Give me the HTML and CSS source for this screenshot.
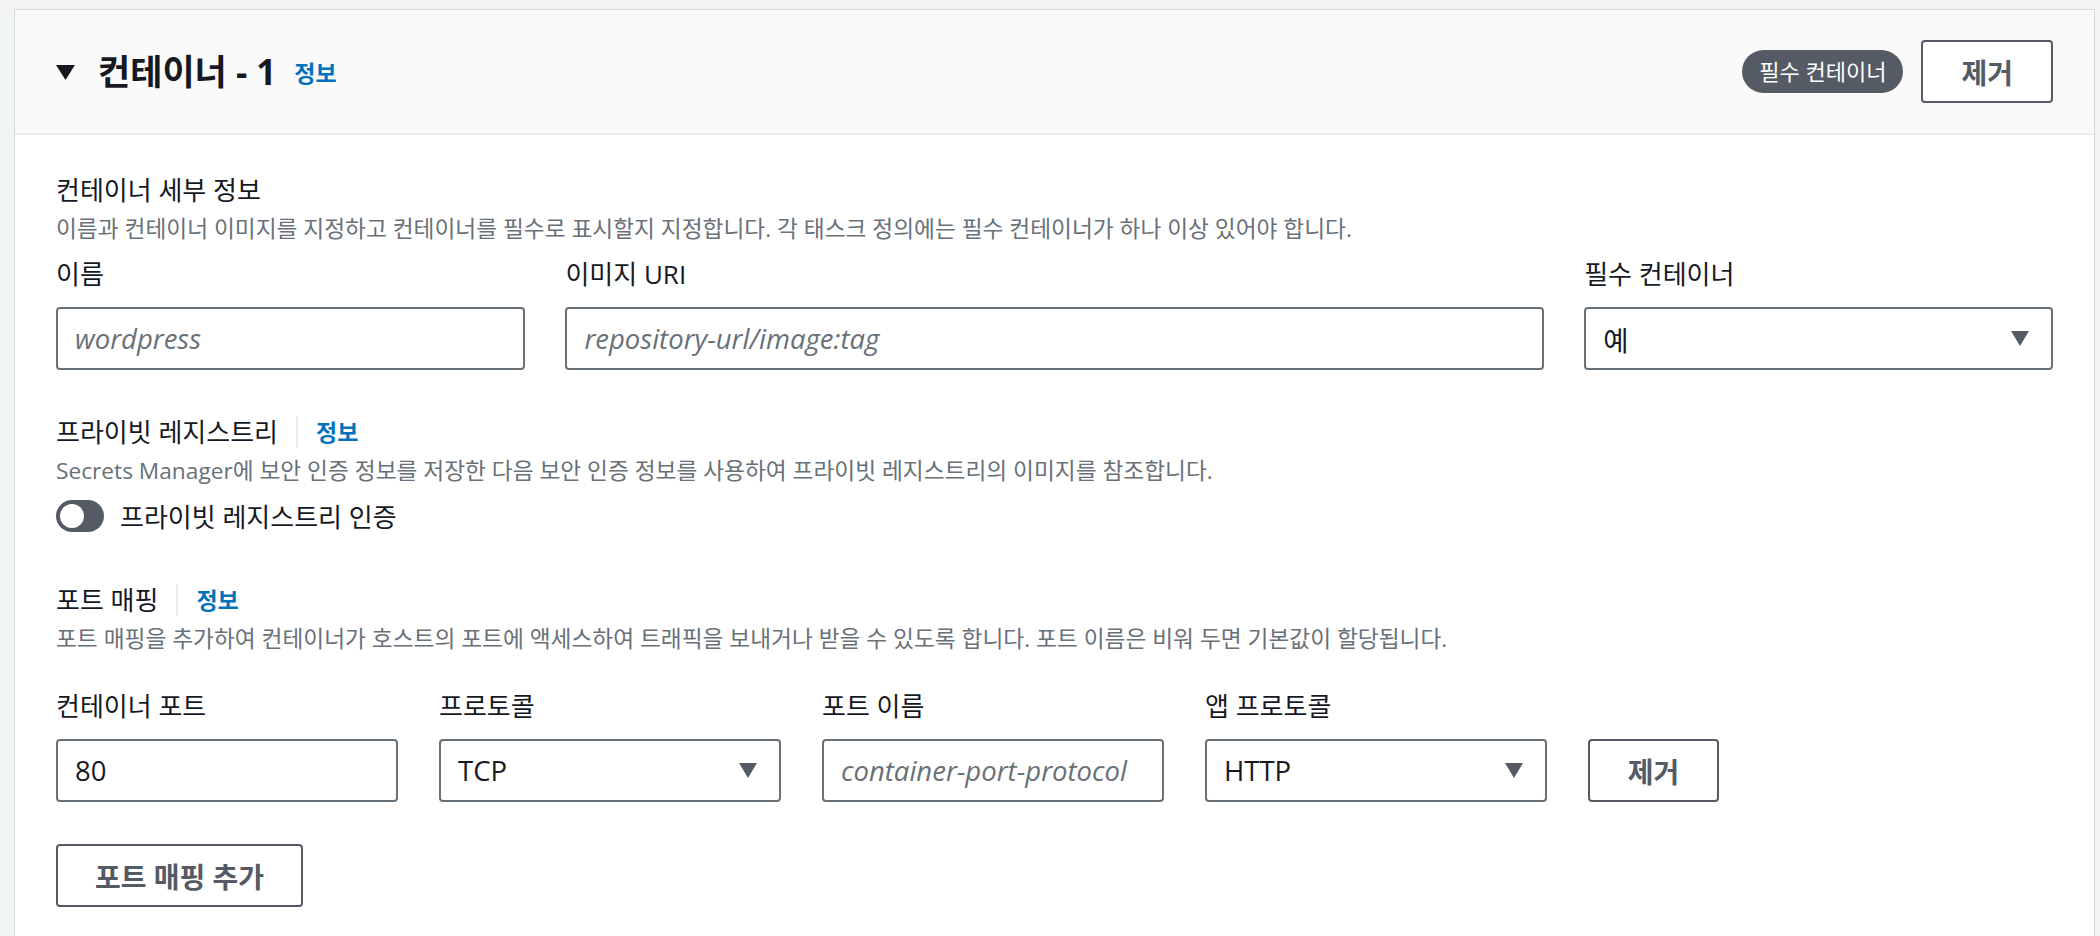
FILE: index.html
```html
<!DOCTYPE html>
<html lang="ko">
<head>
    <meta charset="UTF-8">
    <meta name="viewport" content="width=device-width, initial-scale=1.0">
    <title>컨테이너 - 1</title>
    <link rel="stylesheet" href="styles.css">
</head>
<body>
    <div class="card">
        <div class="card-header">
            <div class="title">
                <svg class="caret" width="19" height="16" viewBox="0 0 19 16"><polygon points="0,1 19,1 9.5,16" fill="#16191f"/></svg>
                <h2>컨테이너 - 1</h2>
                <a class="info" href="#">정보</a>
            </div>
            <div class="actions">
                <span class="badge">필수 컨테이너</span>
                <button class="btn">제거</button>
            </div>
        </div>

        <div class="card-body">
            <section class="group">
                <div class="group-title">컨테이너 세부 정보</div>
                <div class="group-desc">이름과 컨테이너 이미지를 지정하고 컨테이너를 필수로 표시할지 지정합니다. 각 태스크 정의에는 필수 컨테이너가 하나 이상 있어야 합니다.</div>
                <div class="grid4">
                    <div class="field">
                        <label>이름</label>
                        <div class="input placeholder">wordpress</div>
                    </div>
                    <div class="field span2">
                        <label>이미지 URI</label>
                        <div class="input placeholder">repository-url/image:tag</div>
                    </div>
                    <div class="field">
                        <label>필수 컨테이너</label>
                        <div class="input select">
                            <span>예</span>
                            <svg width="18" height="15" viewBox="0 0 18 15"><polygon points="0,0 18,0 9,15" fill="#545b64"/></svg>
                        </div>
                    </div>
                </div>
            </section>

            <section class="group registry">
                <div class="group-title">프라이빗 레지스트리<span class="divider"></span><a class="info" href="#">정보</a></div>
                <div class="group-desc">Secrets Manager에 보안 인증 정보를 저장한 다음 보안 인증 정보를 사용하여 프라이빗 레지스트리의 이미지를 참조합니다.</div>
                <div class="toggle-row">
                    <span class="toggle"><span class="knob"></span></span>
                    <span>프라이빗 레지스트리 인증</span>
                </div>
            </section>

            <section class="group ports">
                <div class="group-title">포트 매핑<span class="divider"></span><a class="info" href="#">정보</a></div>
                <div class="group-desc">포트 매핑을 추가하여 컨테이너가 호스트의 포트에 액세스하여 트래픽을 보내거나 받을 수 있도록 합니다. 포트 이름은 비워 두면 기본값이 할당됩니다.</div>
                <div class="port-row">
                    <div class="field">
                        <label>컨테이너 포트</label>
                        <div class="input">80</div>
                    </div>
                    <div class="field">
                        <label>프로토콜</label>
                        <div class="input select">
                            <span>TCP</span>
                            <svg width="18" height="15" viewBox="0 0 18 15"><polygon points="0,0 18,0 9,15" fill="#545b64"/></svg>
                        </div>
                    </div>
                    <div class="field">
                        <label>포트 이름</label>
                        <div class="input placeholder">container-port-protocol</div>
                    </div>
                    <div class="field">
                        <label>앱 프로토콜</label>
                        <div class="input select">
                            <span>HTTP</span>
                            <svg width="18" height="15" viewBox="0 0 18 15"><polygon points="0,0 18,0 9,15" fill="#545b64"/></svg>
                        </div>
                    </div>
                    <button class="btn small">제거</button>
                </div>
                <button class="btn add">포트 매핑 추가</button>
            </section>
        </div>
    </div>
</body>
</html>
```

FILE: styles.css
```css
* {
    box-sizing: border-box;
}
body {
    margin: 0;
    padding: 9px 5px 0 14px;
    height: 936px;
    overflow: hidden;
    background: #f2f3f3;
    font-family: "Open Sans", "Noto Sans CJK KR", sans-serif;
    color: #16191f;
}
.card {
    background: white;
    border: 1px solid #d5dbdb;
    border-bottom: none;
    min-height: 927px;
}
.card-header {
    height: 125px;
    padding: 0 41px;
    display: flex;
    align-items: center;
    justify-content: space-between;
    background: #fafafa;
    border-bottom: 2px solid #eaeded;
}
.title {
    display: flex;
    align-items: center;
}
.caret {
    margin-right: 23px;
}
.title h2 {
    margin: 0 18px 0 0;
    font-size: 35px;
    font-weight: 700;
    line-height: 44px;
}
.info {
    color: #0073bb;
    font-size: 23px;
    font-weight: 700;
    text-decoration: none;
}
.actions {
    display: flex;
    align-items: center;
    gap: 18px;
}
.badge {
    display: inline-block;
    height: 43px;
    line-height: 43px;
    padding: 0 17px;
    border-radius: 22px;
    background: #545b64;
    color: white;
    font-size: 22px;
}
.btn {
    height: 63px;
    padding: 0 38px;
    background: white;
    border: 2px solid #545b64;
    border-radius: 4px;
    color: #545b64;
    font-family: inherit;
    font-size: 28px;
    font-weight: 700;
}
.card-body {
    padding: 38px 41px 0;
}
.group-title {
    display: flex;
    align-items: center;
    font-size: 26px;
    line-height: 34px;
}
.divider {
    width: 2px;
    height: 32px;
    background: #eaeded;
    margin: 0 18px;
}
.group-desc {
    margin-top: 7px;
    font-size: 22.7px;
    line-height: 30px;
    color: #687078;
}
.grid4 {
    display: grid;
    grid-template-columns: repeat(4, 1fr);
    column-gap: 40.5px;
    margin-top: 13px;
}
.span2 {
    grid-column: span 2;
}
.field label {
    display: block;
    font-size: 26px;
    line-height: 34px;
    margin-bottom: 16px;
}
.input {
    height: 63px;
    padding: 0 22px 0 17px;
    border: 2px solid #687078;
    border-radius: 4px;
    display: flex;
    align-items: center;
    font-size: 27.5px;
    background: white;
}
.placeholder {
    color: #687078;
    font-style: italic;
}
.select {
    justify-content: space-between;
}
.registry {
    margin-top: 45px;
}
.toggle-row {
    display: flex;
    align-items: center;
    gap: 16px;
    margin-top: 13px;
    height: 34px;
    font-size: 26px;
}
.toggle {
    width: 48px;
    height: 32px;
    border-radius: 16px;
    background: #545b64;
    padding: 4px;
}
.knob {
    display: block;
    width: 24px;
    height: 24px;
    border-radius: 50%;
    background: white;
}
.ports {
    margin-top: 50px;
}
.port-row {
    display: flex;
    align-items: flex-end;
    gap: 41.5px;
    margin-top: 35px;
}
.port-row .field {
    width: 341.5px;
}
.btn.small {
    padding: 0;
    width: 131px;
}
.btn.add {
    margin-top: 42px;
    width: 247px;
    padding: 0;
}
```
